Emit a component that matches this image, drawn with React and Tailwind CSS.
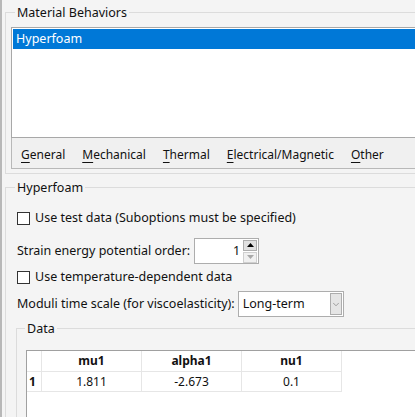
import { ChevronDown } from 'lucide-react'

const TABS = ['General', 'Mechanical', 'Thermal', 'Electrical/Magnetic', 'Other']
const COLUMNS = ['mu1', 'alpha1', 'nu1']
const ROWS = [['1.811', '-2.673', '0.1']]

function GroupTitle({ children, className = '' }) {
  return (
    <div className={`-mt-[9px] w-fit px-[2px] h-[18px] leading-[18px] bg-[#f4f4f4] ${className}`}>
      {children}
    </div>
  )
}

function Checkbox({ label }) {
  return (
    <div className="h-[25px] flex items-center gap-[5px]">
      <span className="w-[13px] h-[13px] border border-[#333] bg-white shrink-0" />
      <span>{label}</span>
    </div>
  )
}

function SpinBox({ value }) {
  return (
    <div className="w-[65px] h-[26px] border border-[#adadad] bg-white flex items-center">
      <span className="flex-1 text-right pr-[3px]">{value}</span>
      <div className="w-[14px] flex flex-col gap-[1px] mr-[1px]">
        <div className="h-[11px] border border-[#adadad] bg-[#e1e1e1] flex items-center justify-center">
          <svg width="7" height="4" viewBox="0 0 7 4"><path d="M0 4 L3.5 0 L7 4 Z" fill="#000" /></svg>
        </div>
        <div className="h-[11px] border border-[#cfcfcf] bg-[#f0f0f0] flex items-center justify-center">
          <svg width="7" height="4" viewBox="0 0 7 4"><path d="M0 0 L3.5 4 L7 0 Z" fill="#a8a8a8" /></svg>
        </div>
      </div>
    </div>
  )
}

function ComboBox({ value }) {
  return (
    <div className="w-[106px] h-[26px] border border-[#adadad] bg-white flex items-center pl-[4px] pr-[1px]">
      <span className="flex-1">{value}</span>
      <div className="w-[12px] h-[22px] border border-[#adadad] bg-[#e5e5e5] flex items-center justify-center">
        <ChevronDown size={11} strokeWidth={1.3} color="#606060" />
      </div>
    </div>
  )
}

export default function App() {
  return (
    <div
      className="w-[415px] h-[417px] overflow-hidden flex bg-[#f4f4f4] text-[12.5px] text-[#111]"
      style={{ fontFamily: '"Noto Sans", "Liberation Sans", sans-serif' }}
    >
      <div className="w-[2px] shrink-0 bg-[#b8b8b8]" />
      <div className="flex-1 flex flex-col pl-[3px] pt-[12px] min-w-0">
        {/* Material Behaviors */}
        <div className="w-[440px] h-[162px] border border-[#dcdcdc] flex flex-col shrink-0">
          <GroupTitle className="ml-[9px]">Material Behaviors</GroupTitle>
          <div className="ml-[5px] mt-[5px] h-[111px] border border-[#a8a8a8] bg-white p-[1px]">
            <div className="h-[20px] bg-[#0078d7] text-white pl-[3px] leading-[20px]">Hyperfoam</div>
          </div>
          <div className="ml-[5px] h-[31px] border-l border-b border-[#b8b8b8] bg-[#f0f0f0] flex items-center gap-[17px] pl-[9px] pt-[4px] text-[12px]">
            {TABS.map(t => (
              <span key={t}>
                <span className="underline underline-offset-[3px]">{t[0]}</span>
                {t.slice(1)}
              </span>
            ))}
          </div>
        </div>

        {/* Hyperfoam */}
        <div className="mt-[13px] w-[440px] flex-1 border-l border-t border-[#dcdcdc] flex flex-col">
          <GroupTitle className="ml-[9px]">Hyperfoam</GroupTitle>
          <div className="pl-[11px] flex flex-col flex-1">
            <div className="mt-[9px]">
              <Checkbox label="Use test data (Suboptions must be specified)" />
            </div>
            <div className="mt-[7px] h-[26px] flex items-center gap-[4px]">
              <span>Strain energy potential order:</span>
              <SpinBox value="1" />
            </div>
            <div className="mt-[1px]">
              <Checkbox label="Use temperature-dependent data" />
            </div>
            <div className="mt-[1px] h-[26px] flex items-center gap-[3px]">
              <span>Moduli time scale (for viscoelasticity):</span>
              <ComboBox value="Long-term" />
            </div>

            {/* Data */}
            <div className="-ml-[1px] mt-[11px] flex-1 border-l border-t border-[#dcdcdc] flex flex-col">
              <GroupTitle className="ml-[8px]">Data</GroupTitle>
              <div className="ml-[9px] mt-[12px] flex-1 border-l border-t border-[#a0a0a0] bg-white">
                <div className="grid grid-cols-[15px_100px_100px_100px] text-[12px]">
                  <div className="h-[21px] border-r border-b border-[#e6e6e6]" />
                  {COLUMNS.map(c => (
                    <div key={c} className="h-[21px] border-r border-b border-[#e6e6e6] flex items-center justify-center font-bold">
                      {c}
                    </div>
                  ))}
                  {ROWS.map((r, i) => (
                    <div key={i} className="contents">
                      <div className="h-[20px] border-r border-b border-[#e6e6e6] flex items-center pl-[2px] font-bold">
                        {i + 1}
                      </div>
                      {r.map((v, j) => (
                        <div key={j} className="h-[20px] border-r border-b border-[#e6e6e6] flex items-center justify-center">
                          {v}
                        </div>
                      ))}
                    </div>
                  ))}
                </div>
              </div>
            </div>
          </div>
        </div>
      </div>
    </div>
  )
}
